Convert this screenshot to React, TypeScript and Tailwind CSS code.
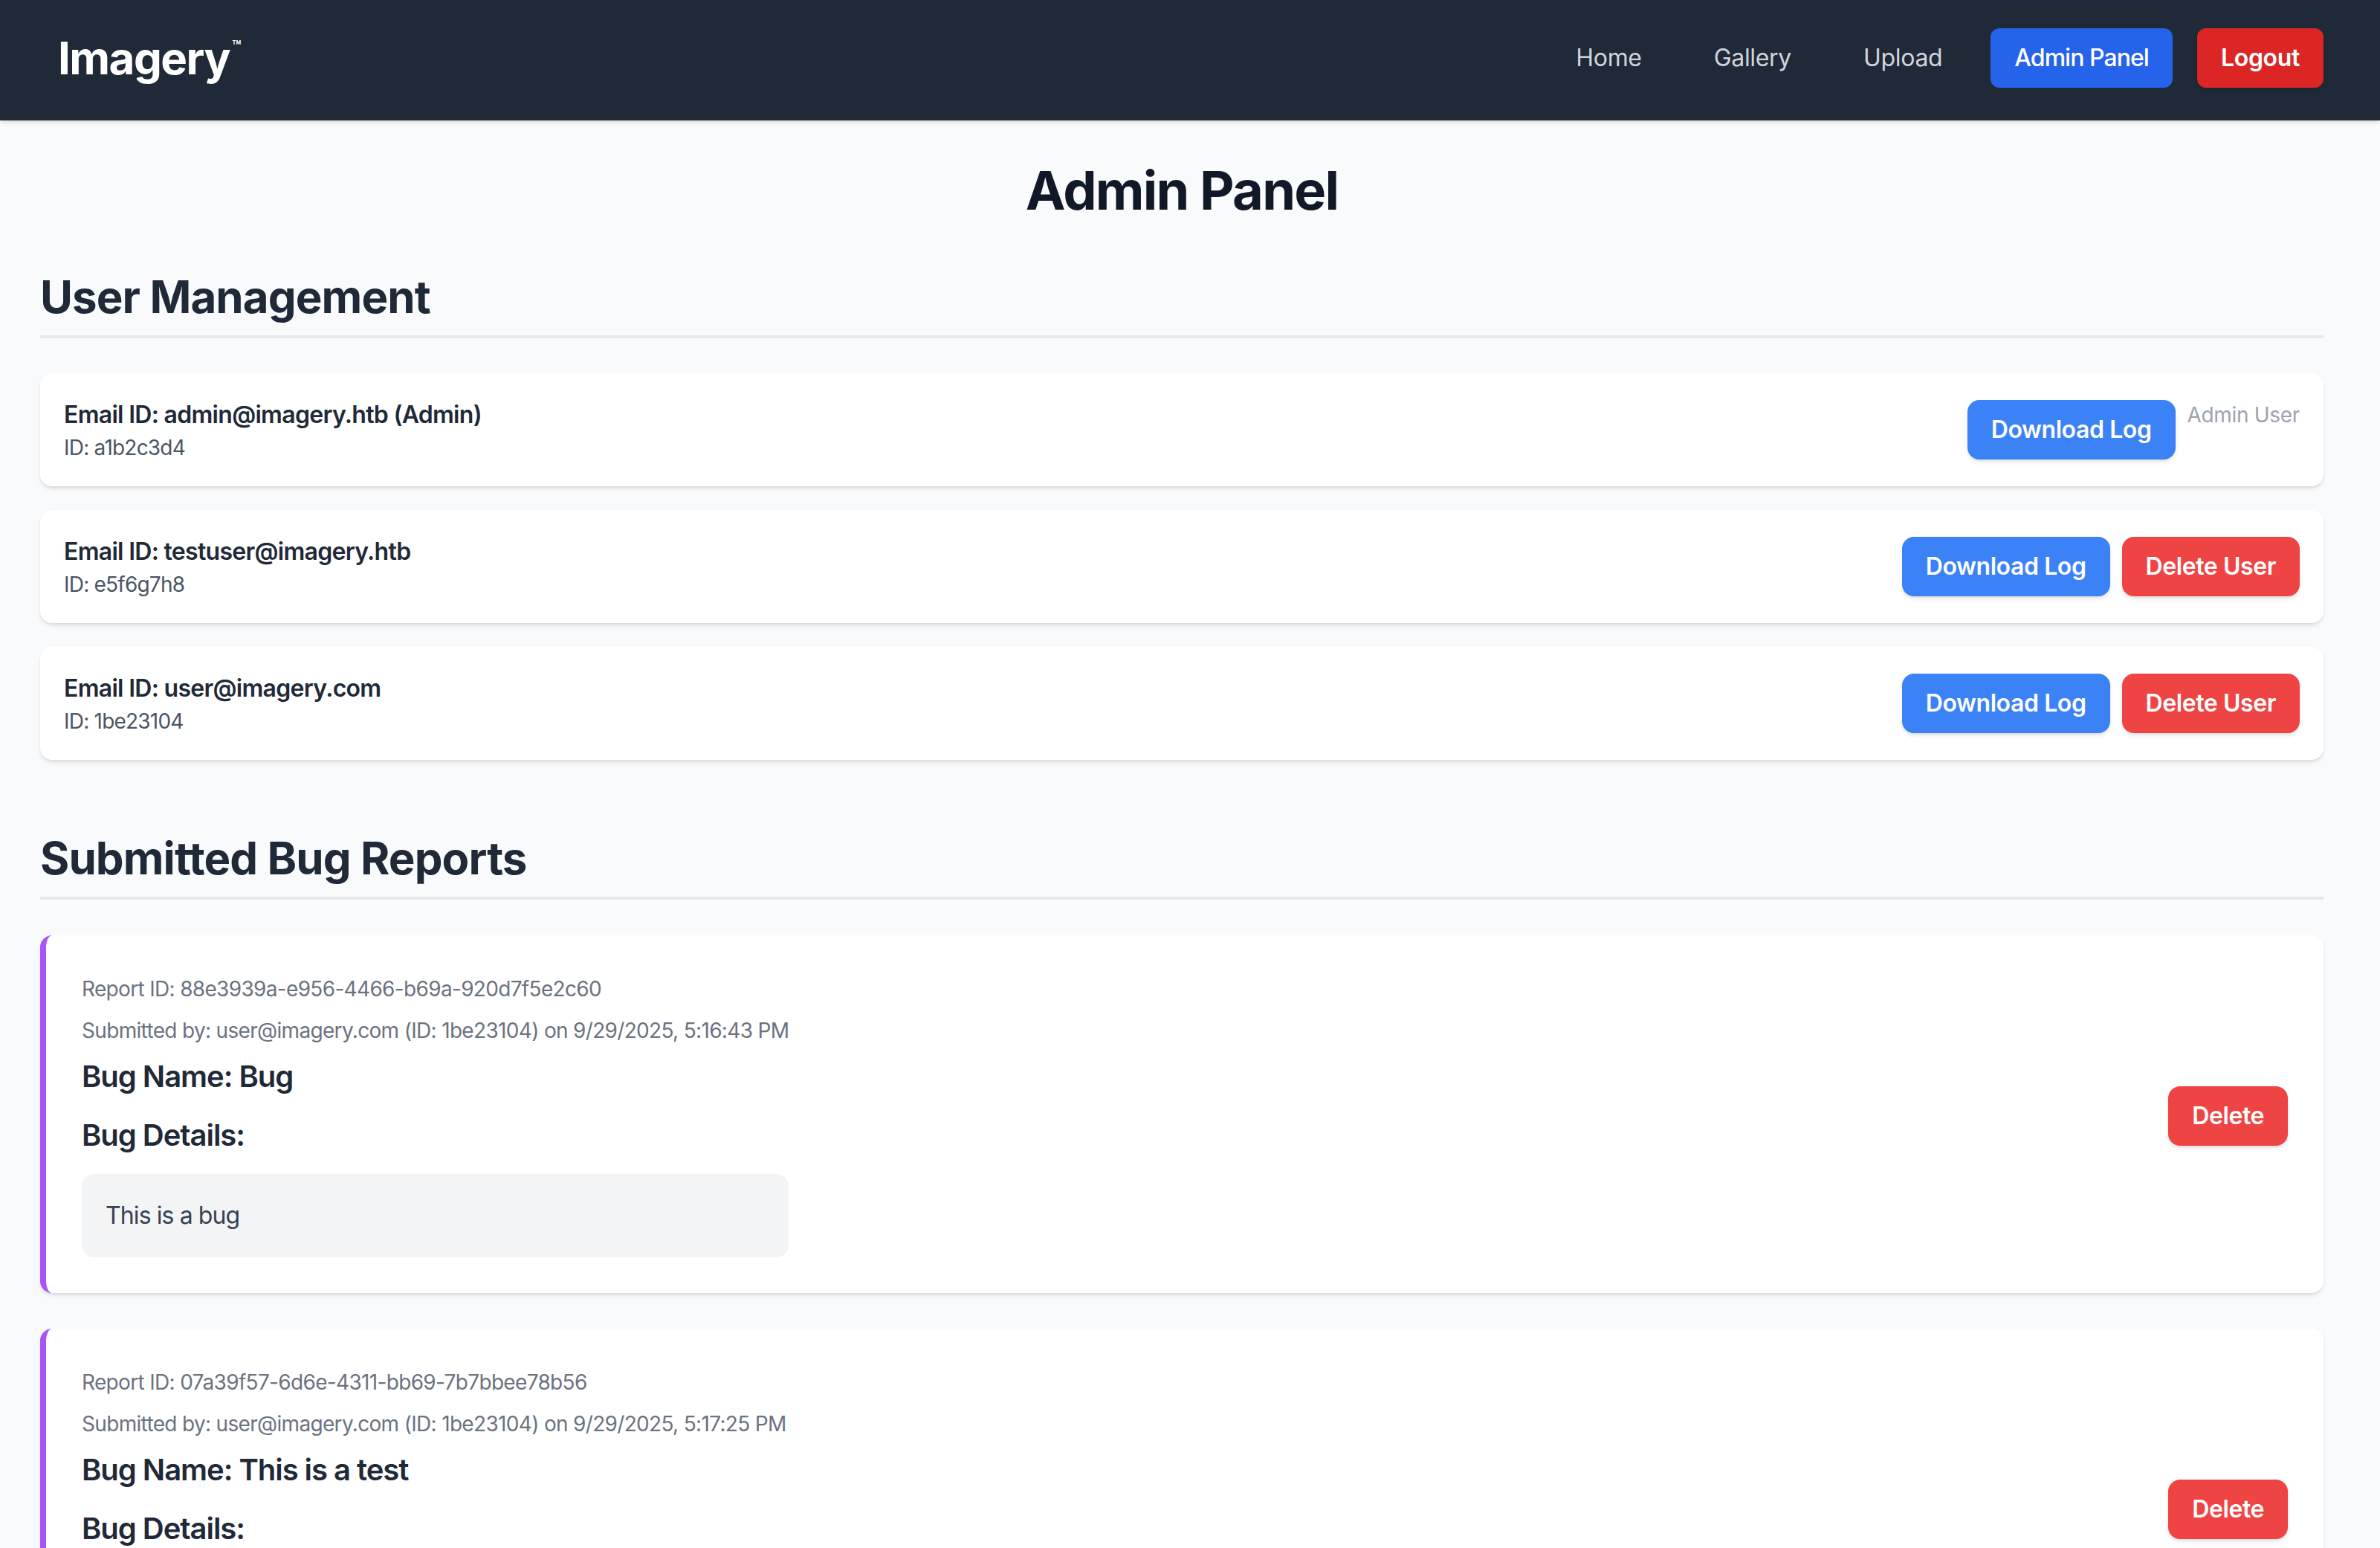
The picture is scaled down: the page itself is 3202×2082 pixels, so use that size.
const users = [
  { email: "admin@imagery.htb", id: "a1b2c3d4", admin: true },
  { email: "testuser@imagery.htb", id: "e5f6g7h8", admin: false },
  { email: "user@imagery.com", id: "1be23104", admin: false },
];

const reports = [
  {
    id: "88e3939a-e956-4466-b69a-920d7f5e2c60",
    by: "user@imagery.com (ID: 1be23104) on 9/29/2025, 5:16:43 PM",
    name: "Bug",
    details: "This is a bug",
  },
  {
    id: "07a39f57-6d6e-4311-bb69-7b7bbee78b56",
    by: "user@imagery.com (ID: 1be23104) on 9/29/2025, 5:17:25 PM",
    name: "This is a test",
    details: "This is a test",
  },
];

const btn =
  "px-[32px] py-[16px] text-[32px] leading-[48px] font-semibold tracking-[-0.013em] text-white rounded-[16px] shadow-md";

export default function App() {
  return (
    <div className="min-h-screen bg-[#f9fafb] font-['Inter',sans-serif] tracking-[-0.02em]">
      {/* Navbar */}
      <nav className="h-[162px] bg-[#1f2937] shadow-md flex items-center justify-between pl-[78px] pr-[76px] pb-[6px]">
        <div className="text-white text-[60px] leading-[72px] font-bold tracking-tight">
          Imagery
          <sup className="ml-[3px] text-[20px] font-semibold tracking-normal align-super">™</sup>
        </div>
        <div className="flex items-center gap-[33px]">
          {["Home", "Gallery", "Upload"].map((l) => (
            <a
              key={l}
              className="px-[32px] py-[16px] text-[32px] leading-[48px] font-normal text-[#d1d5db]"
            >
              {l}
            </a>
          ))}
          <a className="px-[32px] py-[16px] text-[32px] leading-[48px] font-medium tracking-[-0.03em] text-white bg-[#2563eb] rounded-[12px]">
            Admin Panel
          </a>
          <a className="px-[32px] py-[16px] text-[32px] leading-[48px] font-semibold text-white bg-[#dc2626] rounded-[12px] shadow-md">
            Logout
          </a>
        </div>
      </nav>

      <main className="pl-[54px] pr-[76px] pt-[54px] pb-[96px]">
        <h1 className="text-center text-[72px] leading-[80px] font-bold tracking-[-0.024em] text-[#111827] mb-[67px]">
          Admin Panel
        </h1>

        {/* Users */}
        <section className="mb-[96px]">
          <h2 className="text-[60px] leading-[72px] font-bold tracking-[-0.015em] text-[#1f2937] pb-[16px] border-b-4 border-[#e5e7eb] mb-[47px]">
            User Management
          </h2>
          <div className="flex flex-col gap-[32px]">
            {users.map((u) => (
              <div
                key={u.id}
                className="bg-white rounded-[16px] shadow-md p-[32px] flex items-center justify-between"
              >
                <div>
                  <p className="text-[32px] leading-[48px] font-semibold tracking-[-0.022em] text-[#1f2937]">
                    Email ID: {u.email}
                    {u.admin && " (Admin)"}
                  </p>
                  <p className="text-[28px] leading-[40px] tracking-[-0.028em] text-[#4b5563]">
                    ID: {u.id}
                  </p>
                </div>
                <div className="flex items-start gap-[16px]">
                  <button className={`${btn} bg-[#3b82f6]`}>Download Log</button>
                  {u.admin ? (
                    <span className="text-[28px] leading-[40px] text-[#9ca3af]">
                      Admin User
                    </span>
                  ) : (
                    <button className={`${btn} bg-[#ef4444]`}>Delete User</button>
                  )}
                </div>
              </div>
            ))}
          </div>
        </section>

        {/* Bug reports */}
        <section>
          <h2 className="text-[60px] leading-[72px] font-bold tracking-[-0.015em] text-[#1f2937] pb-[16px] border-b-4 border-[#e5e7eb] mb-[48px]">
            Submitted Bug Reports
          </h2>
          <div className="flex flex-col gap-[48px]">
            {reports.map((r) => (
              <div
                key={r.id}
                className="bg-white rounded-[16px] shadow-md border-l-[8px] border-[#a855f7] pl-[48px] pr-[48px] pt-[52px] pb-[48px] flex items-center justify-between"
              >
                <div>
                  <p className="text-[28px] leading-[40px] tracking-[-0.024em] text-[#6b7280] mb-[16px]">
                    Report ID: {r.id}
                  </p>
                  <p className="text-[28px] leading-[40px] tracking-[-0.024em] text-[#6b7280] mb-[14px]">
                    Submitted by: {r.by}
                  </p>
                  <h3 className="text-[40px] leading-[56px] font-semibold tracking-[-0.026em] text-[#1f2937] mb-[23px]">
                    Bug Name: {r.name}
                  </h3>
                  <h4 className="text-[40px] leading-[56px] font-semibold tracking-[-0.026em] text-[#1f2937] mb-[24px]">
                    Bug Details:
                  </h4>
                  <div className="bg-[#f3f4f6] rounded-[16px] p-[32px] text-[32px] leading-[48px] tracking-[-0.028em] text-[#374151]">
                    {r.details}
                  </div>
                </div>
                <button className={`${btn} bg-[#ef4444]`}>Delete</button>
              </div>
            ))}
          </div>
        </section>
      </main>
    </div>
  );
}
